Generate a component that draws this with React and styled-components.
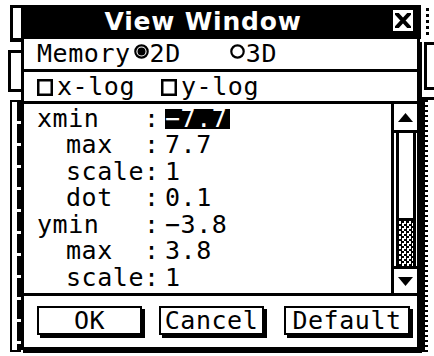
import React from 'react';
import styled, { createGlobalStyle } from 'styled-components';

const GlobalStyle = createGlobalStyle`
  html, body {
    margin: 0;
    padding: 0;
    background: #fff;
  }
  body {
    font-family: "DejaVu Sans Mono", "Liberation Mono", monospace;
    color: #000;
  }
`;

const entries = [
  { label: 'xmin', value: '−7.7', selected: true },
  { label: 'max', value: '7.7', indent: true },
  { label: 'scale', value: '1', indent: true },
  { label: 'dot', value: '0.1', indent: true },
  { label: 'ymin', value: '−3.8' },
  { label: 'max', value: '3.8', indent: true },
  { label: 'scale', value: '1', indent: true },
];

const RadioIcon = ({ on }) => (
  <svg width="15" height="15" viewBox="0 0 15 15">
    <circle cx="7.5" cy="7.5" r="6.2" fill="#fff" stroke="#000" strokeWidth="2.2" />
    {on && <circle cx="7.5" cy="7.5" r="4" fill="#000" />}
  </svg>
);

const CheckIcon = () => (
  <svg width="16" height="17" viewBox="0 0 16 17">
    <rect x="1.25" y="1.25" width="13.5" height="14.5" fill="#fff" stroke="#000" strokeWidth="2.5" />
  </svg>
);

const Arrow = ({ down }) => (
  <svg width="15" height="9" viewBox="0 0 15 9">
    <polygon points={down ? '0,0 15,0 7.5,9' : '0,9 15,9 7.5,0'} fill="#000" />
  </svg>
);

const CloseGlyph = () => (
  <svg width="16" height="15" viewBox="0 0 16 15">
    <path d="M2 1 L14 14 M14 1 L2 14" stroke="#000" strokeWidth="4" strokeLinecap="square" />
  </svg>
);

const App = () => {
  return (
    <>
      <GlobalStyle />
      <Screen>
        <LeftStrip>
          <BackTab />
          <BackNotch />
          <BackPanel />
        </LeftStrip>

        <Dialog>
          <TitleBar>
            <Title>View Window</Title>
            <CloseBox>
              <CloseGlyph />
            </CloseBox>
          </TitleBar>

          <Body>
            <OptionRow>
              <Text>Memory</Text>
              <Radio $gap={3}>
                <RadioIcon on />
              </Radio>
              <Text>2D</Text>
              <Radio $gap={49}>
                <RadioIcon />
              </Radio>
              <Text>3D</Text>
            </OptionRow>

            <OptionRow $height={29}>
              <Check>
                <CheckIcon />
              </Check>
              <Text>x-log</Text>
              <Check $gap={26}>
                <CheckIcon />
              </Check>
              <Text>y-log</Text>
            </OptionRow>

            <ListArea>
              <Entries>
                {entries.map((e, i) => (
                  <EntryRow key={i}>
                    <Label $indent={e.indent}>{e.label}</Label>
                    <Colon>:</Colon>
                    <Value>
                      {e.selected ? <Selected>{e.value}</Selected> : e.value}
                    </Value>
                  </EntryRow>
                ))}
              </Entries>

              <ScrollBar>
                <ArrowBox $bottom>
                  <Arrow />
                </ArrowBox>
                <Rail>
                  <Thumb />
                  <Checker />
                </Rail>
                <ArrowBox $top>
                  <Arrow down />
                </ArrowBox>
              </ScrollBar>
            </ListArea>

            <ButtonRow>
              <Button $width={105}>OK</Button>
              <Button $width={105} $gap={17}>Cancel</Button>
              <Button $width={126} $gap={20}>Default</Button>
            </ButtonRow>
          </Body>
        </Dialog>

        <RightStrip>
          <DottedLine />
          <BackBracket />
          <BackRail />
        </RightStrip>
      </Screen>
    </>
  );
};

const Screen = styled.div`
  display: flex;
  width: 434px;
  height: 356px;
  overflow: hidden;
  background: #fff;
`;

const LeftStrip = styled.div`
  width: 21px;
  flex-shrink: 0;
  display: flex;
  flex-direction: column;
`;

const BackTab = styled.div`
  margin: 5px 0 0 10px;
  height: 30px;
  border: 3px solid #000;
  border-right: none;
  border-bottom-width: 4px;
  background: #fff;
`;

const BackNotch = styled.div`
  margin: 8px 0 0 8px;
  height: 36px;
  border: 3px solid #000;
  border-right: none;
  background: #fff;
`;

const BackPanel = styled.div`
  margin: 8px 0 4px 10px;
  flex: 1;
  border: 2.5px solid #000;
  border-right: none;
  background:
    repeating-linear-gradient(to bottom, #000 0 19px, #fff 19px 22px) right 0 top 0 / 4px 100% no-repeat,
    #fff;
`;

const Dialog = styled.div`
  width: 401px;
  flex-shrink: 0;
  padding-top: 5px;
  display: flex;
  flex-direction: column;
`;

const TitleBar = styled.div`
  height: 34px;
  width: 400px;
  background: #000;
  display: flex;
  align-items: center;
`;

const Title = styled.div`
  flex: 1;
  padding-right: 8px;
  text-align: center;
  color: #fff;
  font-family: "DejaVu Sans", "Verdana", sans-serif;
  font-weight: 700;
  font-size: 25px;
  letter-spacing: 0.8px;
  line-height: 34px;
`;

const CloseBox = styled.div`
  width: 20px;
  height: 21px;
  margin-right: 8px;
  margin-top: -4px;
  background: #fff;
  display: flex;
  align-items: center;
  justify-content: center;
`;

const Body = styled.div`
  width: 399px;
  box-sizing: border-box;
  border: 3px solid #000;
  border-top: none;
  box-shadow: 2px 3px 0 #000;
  background: #fff;
  display: flex;
  flex-direction: column;
`;

const OptionRow = styled.div`
  height: ${(p) => p.$height || 30}px;
  border-bottom: 3px solid #000;
  padding-left: 13px;
  display: flex;
  align-items: center;
  font-size: 25px;
  letter-spacing: 0.55px;
  line-height: ${(p) => p.$height || 30}px;
`;

const Text = styled.span`
  white-space: pre;
`;

const Radio = styled.span`
  display: flex;
  margin-left: ${(p) => p.$gap || 0}px;
  margin-right: 1px;
  margin-top: -5px;
`;

const Check = styled.span`
  display: flex;
  margin-left: ${(p) => p.$gap || 0}px;
  margin-right: 4px;
  margin-top: 1px;
`;

const ListArea = styled.div`
  height: 189px;
  border-bottom: 3px solid #000;
  display: flex;
`;

const Entries = styled.div`
  flex: 1;
  padding: 1.5px 0 0 13px;
  overflow: hidden;
  font-size: 25px;
  letter-spacing: 0.55px;
`;

const EntryRow = styled.div`
  display: grid;
  grid-template-columns: 107px 21px 1fr;
  height: 26.6px;
  line-height: 26.6px;
  white-space: pre;
`;

const Label = styled.span`
  padding-left: ${(p) => (p.$indent ? 29 : 0)}px;
`;

const Colon = styled.span``;

const Value = styled.span``;

const Selected = styled.span`
  display: inline-block;
  background: #000;
  color: #fff;
  line-height: 20px;
  padding-right: 3px;
`;

const ScrollBar = styled.div`
  width: 26px;
  box-sizing: border-box;
  border-left: 3px solid #000;
  display: flex;
  flex-direction: column;
`;

const ArrowBox = styled.div`
  height: ${(p) => (p.$bottom ? 26 : 24)}px;
  border-bottom: ${(p) => (p.$bottom ? '3px solid #000' : 'none')};
  border-top: ${(p) => (p.$top ? '3px solid #000' : 'none')};
  display: flex;
  align-items: center;
  justify-content: center;
`;

const Rail = styled.div`
  flex: 1;
  margin: 0 1px 0 2px;
  border-left: 3px solid #000;
  border-right: 3px solid #000;
  display: flex;
  flex-direction: column;
`;

const Thumb = styled.div`
  height: 85px;
  border-bottom: 3px solid #000;
  background: #fff;
`;

const Checker = styled.div`
  flex: 1;
  background: repeating-conic-gradient(#000 0 25%, #fff 0 50%) 0 0 / 5px 5px;
`;

const ButtonRow = styled.div`
  height: 51px;
  padding: 10px 0 0 13px;
  box-sizing: border-box;
  display: flex;
  align-items: flex-start;
`;

const Button = styled.div`
  width: ${(p) => p.$width}px;
  height: 29px;
  margin-left: ${(p) => p.$gap || 0}px;
  box-sizing: border-box;
  border: 2.5px solid #000;
  box-shadow: 3px 3px 0 #000;
  background: #fff;
  display: flex;
  align-items: center;
  justify-content: center;
  font-size: 25px;
  letter-spacing: 0.55px;
  line-height: 24px;
`;

const RightStrip = styled.div`
  width: 12px;
  flex-shrink: 0;
  display: flex;
  flex-direction: column;
`;

const DottedLine = styled.div`
  margin: 8px 0 0 4px;
  height: 27px;
  border-left: 3px dotted #000;
`;

const BackBracket = styled.div`
  margin-top: 7px;
  height: 42px;
  border: 3px solid #000;
  border-right: none;
  margin-left: 2px;
`;

const BackRail = styled.div`
  margin: 7px 0 4px 0;
  flex: 1;
  border-left: 3px solid #000;
  border-top: 3px solid #000;
  margin-left: 0;
  background:
    repeating-linear-gradient(to bottom, #000 0 2px, #fff 2px 5px) left 0 top 0 / 3px 100% no-repeat;
`;

export default App;
